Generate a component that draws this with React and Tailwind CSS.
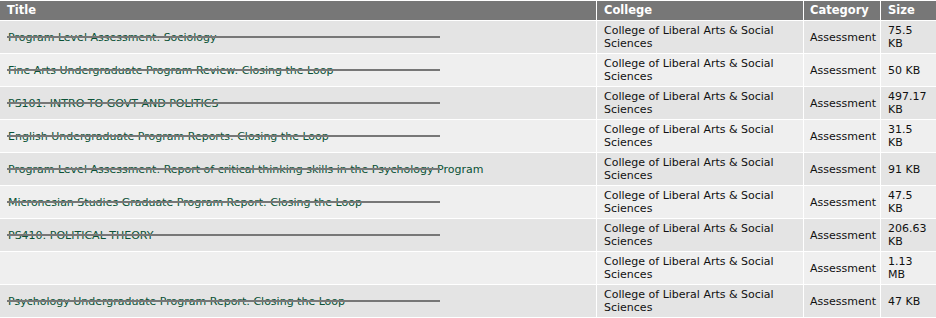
const rows = [
  { title: 'Program Level Assessment: Sociology', size: '75.5 KB' },
  { title: 'Fine Arts Undergraduate Program Review: Closing the Loop', size: '50 KB' },
  { title: 'PS101: INTRO TO GOVT AND POLITICS', size: '497.17 KB' },
  { title: 'English Undergraduate Program Reports: Closing the Loop', size: '31.5 KB' },
  { title: 'Program Level Assessment: Report of critical thinking skills in the Psychology Program', size: '91 KB' },
  { title: 'Micronesian Studies Graduate Program Report: Closing the Loop', size: '47.5 KB' },
  { title: 'PS410: POLITICAL THEORY', size: '206.63 KB' },
  { title: '', size: '1.13 MB' },
  { title: 'Psychology Undergraduate Program Report: Closing the Loop', size: '47 KB' },
];

const App = () => {
  return (
    <div className="w-[936px] h-[318px] overflow-hidden bg-white pt-px font-['DejaVu_Sans',sans-serif] text-[11px] leading-[13px] text-[#111111]">
      <div className="grid grid-cols-[596px_206px_76px_1fr] gap-px">
        <div className="bg-[#777777] h-[19px] px-[7px] flex items-center font-bold text-[11.5px] text-white">Title</div>
        <div className="bg-[#777777] h-[19px] px-[7px] flex items-center font-bold text-[11.5px] text-white">College</div>
        <div className="bg-[#777777] h-[19px] px-[6px] flex items-center font-bold text-[11.5px] text-white">Category</div>
        <div className="bg-[#777777] h-[19px] px-[7px] flex items-center font-bold text-[11.5px] text-white">Size</div>

        {rows.map((row, i) => {
          const bg = i % 2 === 0 ? 'bg-[#e4e4e4]' : 'bg-[#efefef]';
          return (
            <div key={i} className="contents">
              <div className={`${bg} h-[32px] px-[8px] flex items-center relative`}>
                {row.title && (
                  <>
                    <span className="text-[#0a5236] whitespace-nowrap">{row.title}</span>
                    <div className="absolute left-[7px] top-[15px] w-[433px] h-[2px] bg-[#777777]" />
                  </>
                )}
              </div>
              <div className={`${bg} h-[32px] px-[7px] flex items-center`}>
                College of Liberal Arts &amp; Social Sciences
              </div>
              <div className={`${bg} h-[32px] px-[6px] flex items-center`}>Assessment</div>
              <div className={`${bg} h-[32px] px-[7px] flex items-center`}>{row.size}</div>
            </div>
          );
        })}
      </div>
    </div>
  );
};

export default App;
